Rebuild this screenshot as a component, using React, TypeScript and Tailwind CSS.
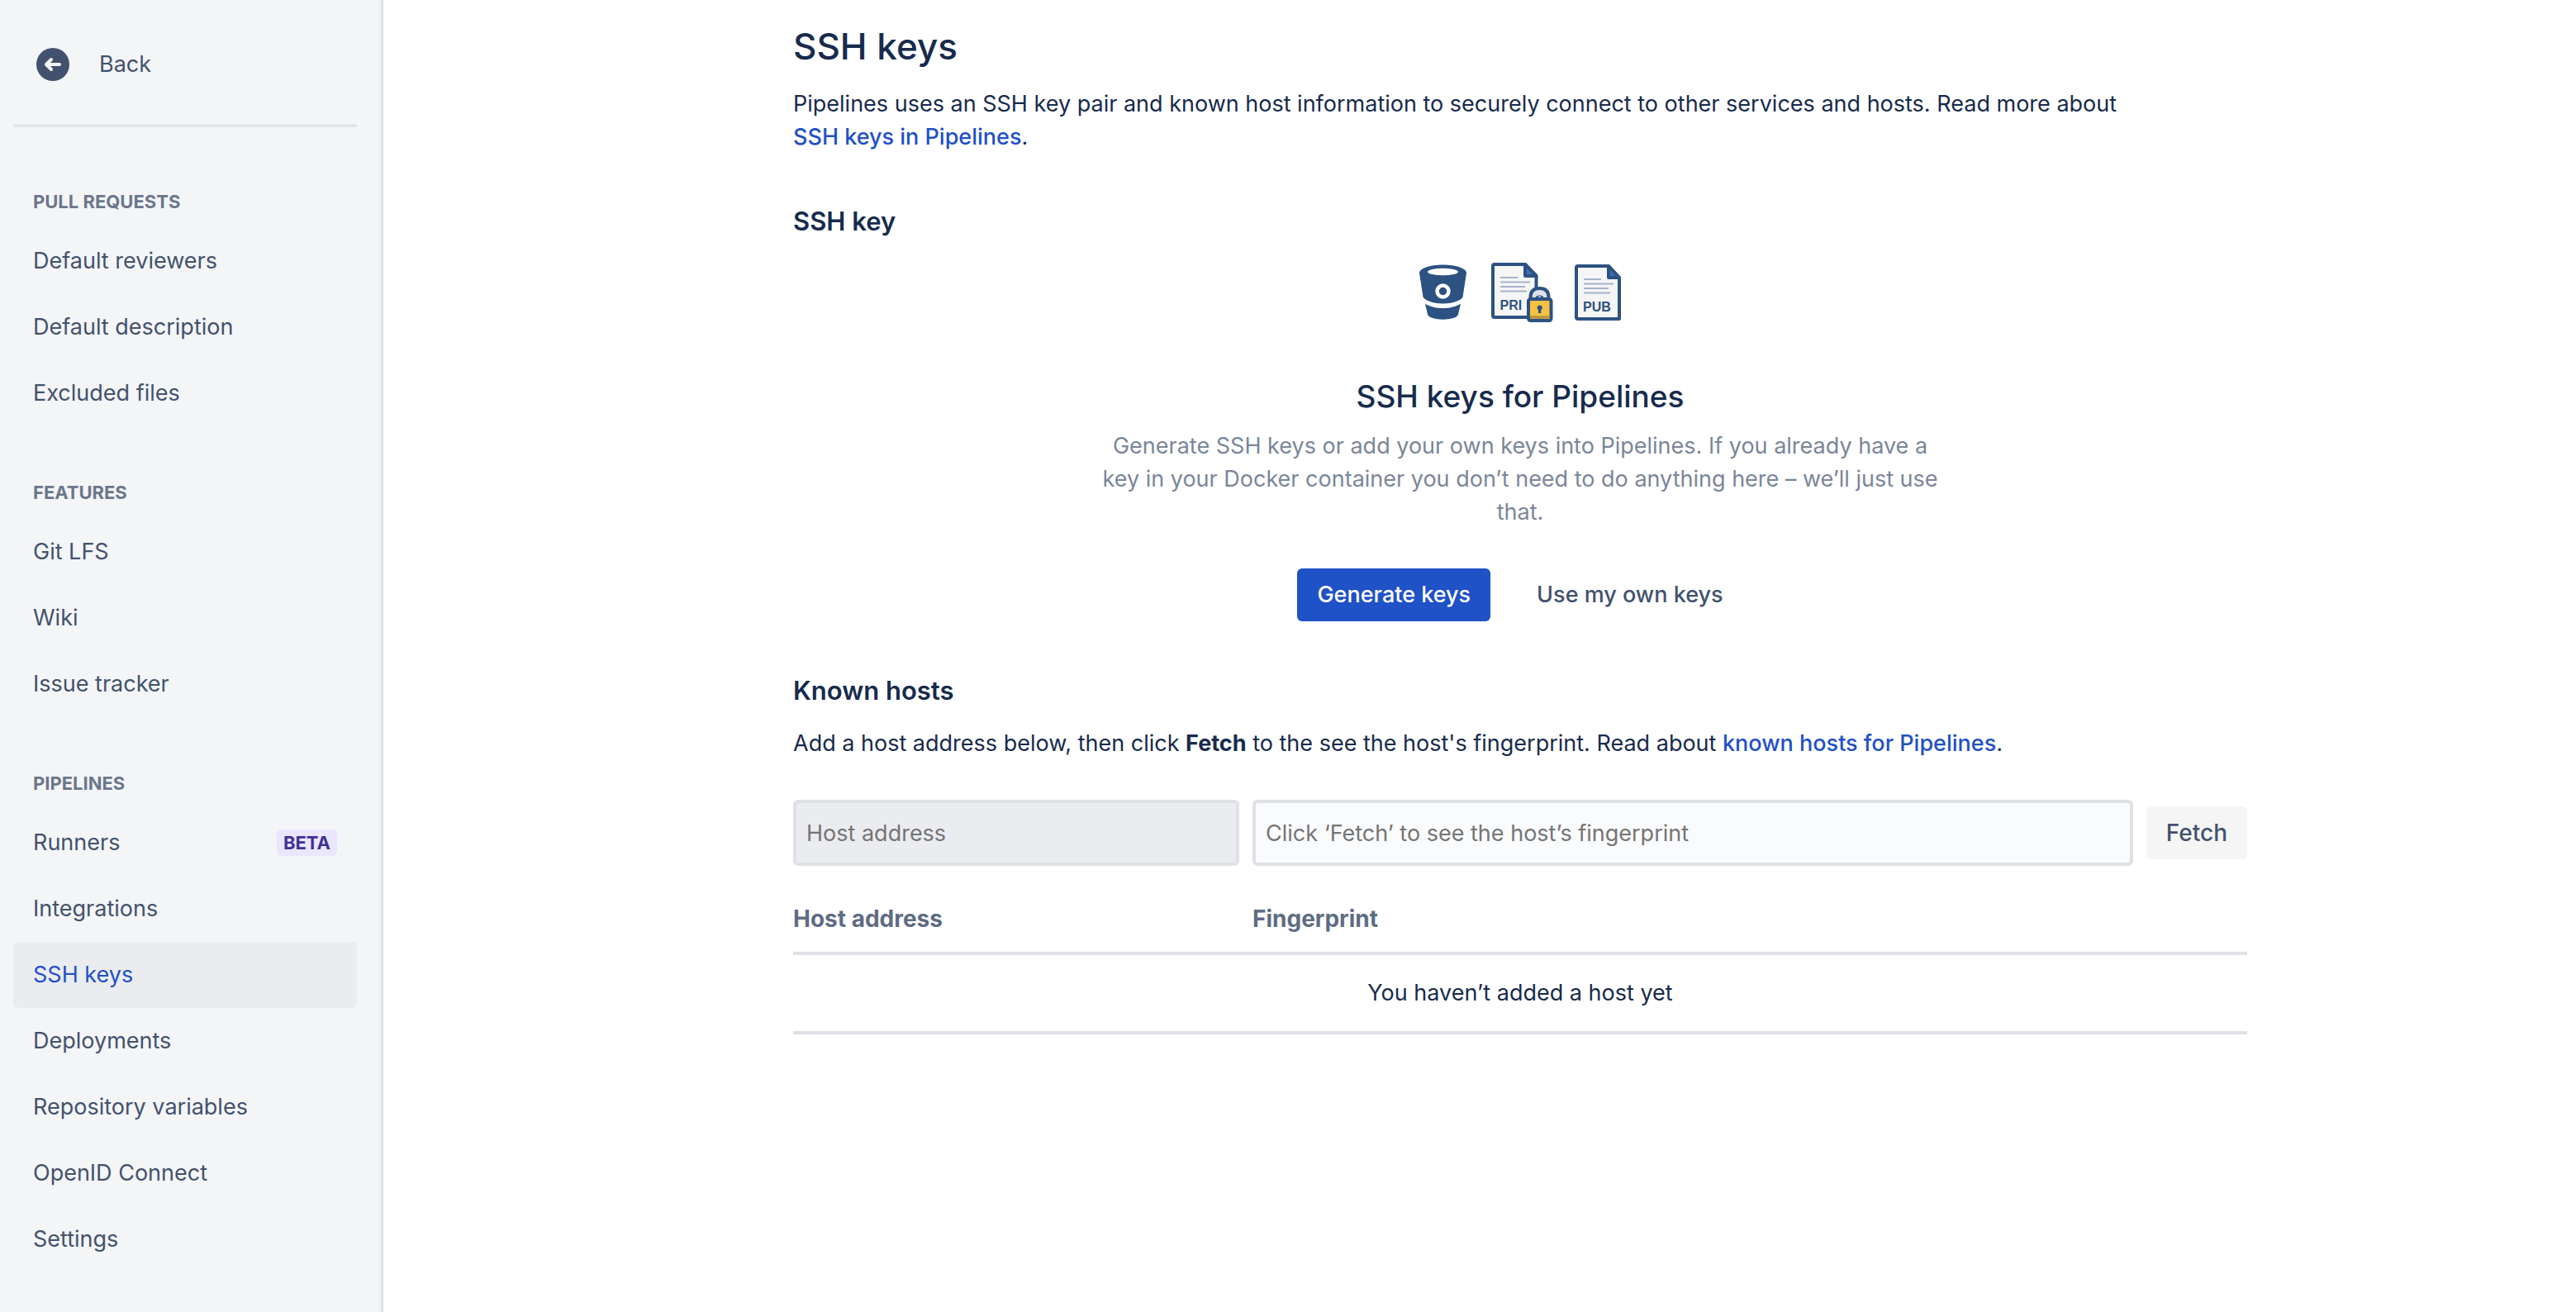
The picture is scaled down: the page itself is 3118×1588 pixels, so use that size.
import type { ReactNode } from "react";

type NavItem = { label: string; badge?: string; current?: boolean };
type NavSection = { title: string; items: NavItem[] };

const sections: NavSection[] = [
  {
    title: "PULL REQUESTS",
    items: [
      { label: "Default reviewers" },
      { label: "Default description" },
      { label: "Excluded files" },
    ],
  },
  {
    title: "FEATURES",
    items: [{ label: "Git LFS" }, { label: "Wiki" }, { label: "Issue tracker" }],
  },
  {
    title: "PIPELINES",
    items: [
      { label: "Runners", badge: "BETA" },
      { label: "Integrations" },
      { label: "SSH keys", current: true },
      { label: "Deployments" },
      { label: "Repository variables" },
      { label: "OpenID Connect" },
      { label: "Settings" },
    ],
  },
];

function BackIcon() {
  return (
    <svg viewBox="0 0 40 40" className="size-10 shrink-0" aria-hidden="true">
      <circle cx="20" cy="20" r="20" fill="#42526e" />
      <path
        d="M28 20H12.5M18 14l-6 6 6 6"
        fill="none"
        stroke="#f4f5f7"
        strokeWidth="4"
        strokeLinecap="round"
        strokeLinejoin="round"
      />
    </svg>
  );
}

function Sidebar() {
  return (
    <aside className="w-[464px] shrink-0 border-r-2 border-[#dcdee2] bg-[#f4f5f7] px-4 text-[#42526e] shadow-[inset_-3px_0_3px_-2px_#dfe1e6]">
      <a href="#back" className="mt-[38px] flex h-20 items-center gap-9 pl-7">
        <BackIcon />
        Back
      </a>
      <hr className="mr-3.5 mt-8 h-1 rounded-sm border-0 bg-[#e2e4e9]" />
      <nav aria-label="Repository settings" className="flex flex-col gap-16 pt-[74px]">
        {sections.map((section) => (
          <section key={section.title}>
            <h2 className="mb-4 px-6 text-[22px] font-bold leading-8 text-[#6b778c]">
              {section.title}
            </h2>
            <ul>
              {section.items.map((item) => (
                <li key={item.label}>
                  <a
                    href="#settings"
                    aria-current={item.current ? "page" : undefined}
                    className={
                      item.current
                        ? "mr-3.5 flex h-20 items-center justify-between rounded-md bg-[#ebecf0] px-6 text-[#1f51c7]"
                        : "mr-3.5 flex h-20 items-center justify-between rounded-md px-6"
                    }
                  >
                    {item.label}
                    {item.badge && (
                      <span className="rounded-md bg-[#eae6ff] px-2 text-[22px] font-bold leading-8 text-[#403294]">
                        {item.badge}
                      </span>
                    )}
                  </a>
                </li>
              ))}
            </ul>
          </section>
        ))}
      </nav>
    </aside>
  );
}

function KeyIllustration() {
  return (
    <svg viewBox="0 0 244 76" className="h-[76px] w-[244px]" aria-hidden="true">
      {/* bucket */}
      <path
        d="M0 12.500C0 7 12 2.500 28.500 2.500S57 7 57 12.500L52.500 41.500C50 46 39 49.500 28.500 49.500S7 46 4.500 41.500Z"
        fill="#2c5282"
      />
      <ellipse cx="28.500" cy="11" rx="18.500" ry="4.300" fill="#fff" />
      <circle cx="28.500" cy="34.500" r="7" fill="none" stroke="#fff" strokeWidth="4.500" />
      <path
        d="M7 49.500C12 53 20 55 28.500 55S45 53 50 49.500L47 62.500C46 66.500 37 68.700 28.500 68.700S11 66.500 10 62.500Z"
        fill="#2c5282"
      />
      {/* private key document */}
      <path
        d="M91 2H128L141.500 16V66H91Q89 66 89 64V4Q89 2 91 2Z"
        fill="#f5f5f5"
        stroke="#2c5282"
        strokeWidth="4"
        strokeLinejoin="round"
      />
      <path
        d="M128 2V16H141.500Z"
        fill="#4470b0"
        stroke="#2c5282"
        strokeWidth="4"
        strokeLinejoin="round"
      />
      <path d="M98 18H119M98 23.500H134M98 29H128M98 34.500H130" stroke="#a5b3cc" strokeWidth="2" />
      <text
        x="97.500"
        y="57"
        fontFamily="Liberation Sans, sans-serif"
        fontSize="16"
        fontWeight="700"
        fill="#2c5282"
      >
        PRI
      </text>
      <path
        d="M134.500 46V42Q134.500 31 145.500 31T156.500 42V46Z"
        fill="#dfe1e6"
        stroke="#2c5282"
        strokeWidth="4"
      />
      <path d="M140 46V44Q140 39.500 145.500 39.500T151 44V46Z" fill="#2c5282" />
      <circle cx="145.500" cy="41.500" r="1.200" fill="#dfe1e6" />
      <rect x="132" y="44" width="27.500" height="26" rx="2.500" fill="#f6c042" stroke="#2c5282" strokeWidth="4" />
      <path d="M134 66H157.500" stroke="#b99440" strokeWidth="3.500" />
      <circle cx="145.700" cy="54.500" r="3" fill="#2c5282" />
      <path d="M144 55H147.300V61H144Z" fill="#2c5282" />
      {/* public key document */}
      <path
        d="M192 4H229L242 18V68H192Q190 68 190 66V6Q190 4 192 4Z"
        fill="#f5f5f5"
        stroke="#2c5282"
        strokeWidth="4"
        strokeLinejoin="round"
      />
      <path
        d="M229 4V18H242Z"
        fill="#4470b0"
        stroke="#2c5282"
        strokeWidth="4"
        strokeLinejoin="round"
      />
      <path d="M199 20H220M199 25.500H235M199 31H229M199 36.500H231" stroke="#a5b3cc" strokeWidth="2" />
      <text
        x="198"
        y="59"
        fontFamily="Liberation Sans, sans-serif"
        fontSize="16"
        fontWeight="700"
        fill="#2c5282"
      >
        PUB
      </text>
    </svg>
  );
}

function DocLink({ children }: { children: ReactNode }) {
  return (
    <a href="#docs" className="whitespace-nowrap font-medium text-[#1f51c7]">
      {children}
    </a>
  );
}

export default function App() {
  return (
    <div
      className="flex min-h-screen bg-white text-[27px] leading-10 text-[#172b4d]"
      style={{ fontFamily: "Inter, sans-serif" }}
    >
      <Sidebar />
      <main className="min-w-0 flex-1 pl-[98px]">
        <div className="mx-auto max-w-[1760px]">
          <h1 className="pt-7 text-[44px] font-medium leading-14">SSH keys</h1>
          <p className="mt-[22px]">
            Pipelines uses an SSH key pair and known host information to securely connect to other
            services and hosts. Read more about <DocLink>SSH keys in Pipelines</DocLink>.
          </p>

          <h2 className="mt-[62px] text-[31px] font-semibold leading-10">SSH key</h2>
          <section className="mt-[30px] flex flex-col items-center text-center">
            <KeyIllustration />
            <h3 className="mt-[62px] text-[37px] font-medium leading-12">SSH keys for Pipelines</h3>
            <p className="mt-4 max-w-[1024px] text-[#7a869a]">
              Generate SSH keys or add your own keys into Pipelines. If you already have a key in
              your Docker container you don’t need to do anything here – we’ll just use that.
            </p>
            <div className="mt-12 flex gap-8">
              <button
                type="button"
                className="h-16 rounded-md bg-[#1f51c7] px-6 font-medium text-white"
              >
                Generate keys
              </button>
              <button type="button" className="h-16 rounded-md px-6 font-medium text-[#42526e]">
                Use my own keys
              </button>
            </div>
          </section>

          <h2 className="mt-16 text-[31px] font-semibold leading-10">Known hosts</h2>
          <p className="mt-6">
            Add a host address below, then click <strong className="font-bold">Fetch</strong> to the
            see the host's fingerprint. Read about <DocLink>known hosts for Pipelines</DocLink>.
          </p>
          <form className="mt-12 flex items-center gap-4" onSubmit={(e) => e.preventDefault()}>
            <input
              type="text"
              aria-label="Host address"
              placeholder="Host address"
              className="h-20 w-[540px] shrink-0 rounded-md border-4 border-[#dfe1e6] bg-[#ebecf0] px-3 placeholder:text-[#757575]"
            />
            <input
              type="text"
              readOnly
              aria-label="Fingerprint"
              placeholder="Click ‘Fetch’ to see the host’s fingerprint"
              className="h-20 min-w-0 flex-1 rounded-md border-4 border-[#dfe1e6] bg-[#fafbfc] px-3 placeholder:text-[#757575]"
            />
            <button
              type="submit"
              className="h-16 rounded-md bg-[#f5f5f5] px-6 text-[28px] font-medium text-[#42526e]"
            >
              Fetch
            </button>
          </form>
          <table className="mt-9 w-full table-fixed border-collapse">
            <thead>
              <tr className="border-b-4 border-[#dfe1e6] text-left text-[28px] text-[#5e6c84]">
                <th scope="col" className="w-[556px] pb-5 pt-2 font-bold">
                  Host address
                </th>
                <th scope="col" className="pb-5 pt-2 font-bold">
                  Fingerprint
                </th>
              </tr>
            </thead>
            <tbody>
              <tr className="border-b-4 border-[#dfe1e6] text-center">
                <td colSpan={2} className="py-[26px]">
                  You haven’t added a host yet
                </td>
              </tr>
            </tbody>
          </table>
        </div>
      </main>
    </div>
  );
}
